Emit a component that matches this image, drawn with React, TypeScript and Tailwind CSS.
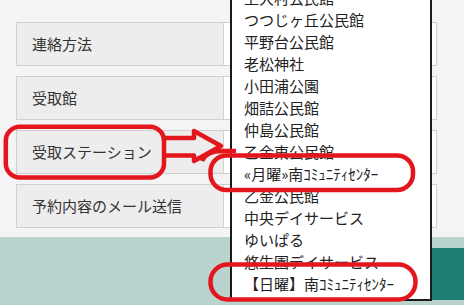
import React from "react";

const rows = ["連絡方法", "受取館", "受取ステーション", "予約内容のメール送信"];

const items = [
  "上大村公民館",
  "つつじヶ丘公民館",
  "平野台公民館",
  "老松神社",
  "小田浦公園",
  "畑詰公民館",
  "仲島公民館",
  "乙金東公民館",
  "«月曜»南ｺﾐｭﾆﾃｨｾﾝﾀｰ",
  "乙金公民館",
  "中央デイサービス",
  "ゆいぱる",
  "悠生園デイサービス",
  "【日曜】南ｺﾐｭﾆﾃｨｾﾝﾀｰ",
];

export default function App() {
  return (
    <div className="relative w-[464px] h-[305px] overflow-hidden bg-[#f4f4f4] font-['Noto_Sans_CJK_JP','Noto_Sans',sans-serif]">
      <div className="pt-[22px] pl-4 w-[437px] flex flex-col gap-[10px]">
        {rows.map((r) => (
          <div key={r} className="flex h-[44px] border border-[#cfcfcf]">
            <div className="w-[207px] bg-[#ededed] border-r border-[#d2d2d2] flex items-center pl-[15px] text-[15px] text-[#333]">
              {r}
            </div>
            <div className="flex-1 bg-white" />
          </div>
        ))}
      </div>
      <div className="mt-[9px] h-[68px] bg-[#b9d3cf] flex justify-end pt-[11px]">
        <div className="w-[170px] h-[52px] bg-[#1e7e76]" />
      </div>

      <div className="absolute left-[230px] bottom-[4px] w-[202px] border-2 border-[#1a1a1a] bg-white pb-[4px]">
        {items.map((it) => (
          <div key={it} className="h-[22px] leading-[22px] pl-[12px] text-[15px] text-[#222] whitespace-nowrap">
            {it}
          </div>
        ))}
      </div>

      <svg className="absolute inset-0 pointer-events-none" width="464" height="305" viewBox="0 0 464 305">
        <g fill="none" stroke="#e3161e" strokeWidth="4.5" strokeLinejoin="round">
          <rect x="5.8" y="126.7" width="158.2" height="50.8" rx="14" />
          <path d="M164 138 L194 138 L194 131 L221 146 L194 161 L194 155.5 L164 155.5" />
          <rect x="210.5" y="155.5" width="202.5" height="34.5" rx="16" />
          <path d="M202 161 Q206 151 222 151 L236 151" />
          <rect x="210.5" y="264.5" width="205" height="35" rx="17" />
        </g>
      </svg>
    </div>
  );
}
